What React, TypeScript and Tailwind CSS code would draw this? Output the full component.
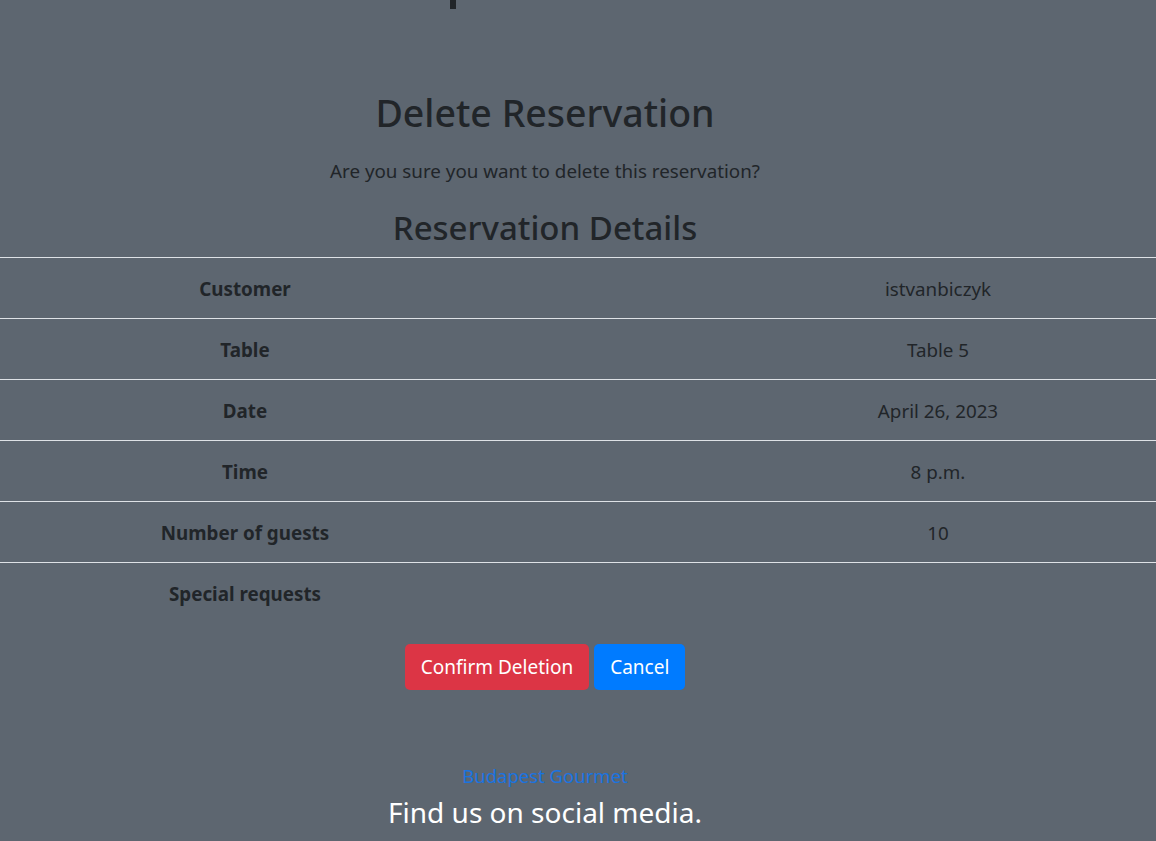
import React from "react";

const rows: [string, string][] = [
  ["Customer", "istvanbiczyk"],
  ["Table", "Table 5"],
  ["Date", "April 26, 2023"],
  ["Time", "8 p.m."],
  ["Number of guests", "10"],
  ["Special requests", ""],
];

export default function App() {
  return (
    <div className="min-h-[841px] bg-[#5d6670] text-[#212529] font-['Noto_Sans',sans-serif] overflow-hidden">
      {/* tail of the page title scrolled off the top */}
      <div className="h-[9px] flex">
        <div className="ml-[450px] w-[6px] h-[9px] bg-[#212529]" />
      </div>

      <div className="pr-[66px] text-center mt-[82px]">
        <h1 className="text-[37.5px] leading-[44px] font-medium">Delete Reservation</h1>
        <p className="mt-[22px] text-[18.8px] leading-[28px]">
          Are you sure you want to delete this reservation?
        </p>
        <h2 className="mt-[22px] text-[33px] leading-[42px] font-medium">Reservation Details</h2>
      </div>

      <div className="mt-[8px] border-t border-[#dee2e6]">
        {rows.map(([label, value], i) => (
          <div
            key={label}
            className={`grid grid-cols-[490px_230px_1fr] h-[61px] pt-[2px] items-center text-[18.8px] ${
              i < rows.length - 1 ? "border-b border-[#dee2e6]" : ""
            }`}
          >
            <div className="text-center font-bold">{label}</div>
            <div />
            <div className="text-center">{value}</div>
          </div>
        ))}
      </div>

      <div className="pr-[66px] flex justify-center gap-[5px] mt-[20px]">
        <button className="h-[46px] px-[16px] rounded-[5px] bg-[#dc3545] text-white text-[19px]">
          Confirm Deletion
        </button>
        <button className="h-[46px] px-[16px] rounded-[5px] bg-[#007bff] text-white text-[19px]">
          Cancel
        </button>
      </div>

      <footer className="pr-[66px] text-center mt-[73px]">
        <a className="block text-[18.5px] leading-[26px] text-[#1a73e0]">Budapest Gourmet</a>
        <p className="mt-[3px] text-[28px] leading-[40px] text-white">Find us on social media.</p>
      </footer>
    </div>
  );
}
